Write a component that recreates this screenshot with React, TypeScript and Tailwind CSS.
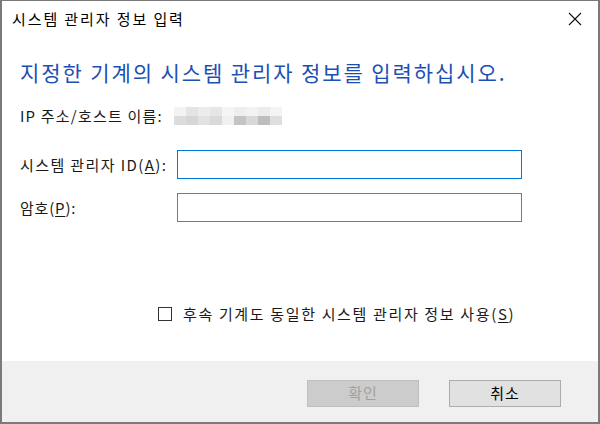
import React from 'react';

const font = { fontFamily: '"Noto Sans CJK KR", "Noto Sans", sans-serif' };

const mosaic = [
    ['#f3f3f3', '#e4e4e4', '#ececec', '#e6e6e6', '#f5f5f5', '#eeeeee', '#f2f2f2', '#ececec', '#f4f4f4'],
    ['#dcdcdc', '#d6d6d6', '#e2e2e2', '#dadada', '#f0f0f0', '#c2c4c6', '#d8d8d8', '#bcbec0', '#dedede'],
];

const Mnemonic: React.FC<{ k: string }> = ({ k }) => <span className="underline underline-offset-2">{k}</span>;

const App: React.FC = () => (
    <div className="w-[600px] h-[424px] bg-white flex flex-col border-t border-x-2 border-b-2 border-[#7a7a7a] text-[#1a1a1a] overflow-hidden" style={font}>
        <div className="h-[36px] shrink-0 flex items-center justify-between pl-[10px] pr-[12px]">
            <span className="text-[15px] leading-[20px] tracking-[1.9px] text-black">시스템 관리자 정보 입력</span>
            <svg width="14" height="14" viewBox="0 0 14 14" className="mr-[4px]">
                <path d="M1 1 L13 13 M13 1 L1 13" stroke="#111" strokeWidth="1.1" fill="none" />
            </svg>
        </div>

        <div className="flex-1 flex flex-col pl-[18px]">
            <h1 className="mt-[22px] text-[21px] leading-[26px] tracking-[1.9px] text-[#1c4fb4]">지정한 기계의 시스템 관리자 정보를 입력하십시오.</h1>

            <div className="mt-[21px] flex items-center h-[20px] text-[15px]">
                <span className="w-[154px] tracking-[1.2px]">IP 주소/호스트 이름:</span>
                <div className="flex flex-col">
                    {mosaic.map((row, r) => (
                        <div key={r} className="flex">
                            {row.map((c, i) => <div key={i} className="w-[12px] h-[9px]" style={{ backgroundColor: c }} />)}
                        </div>
                    ))}
                </div>
            </div>

            <div className="mt-[24px] grid grid-cols-[157px_345px] gap-y-[14px] items-center text-[15px] leading-[20px]">
                <span className="tracking-[1.4px]">시스템 관리자 ID(<Mnemonic k="A" />):</span>
                <div className="h-[29px] border border-[#0078d7] bg-white" />
                <span className="tracking-[0.8px]">암호(<Mnemonic k="P" />):</span>
                <div className="h-[29px] border border-[#7a7a7a] bg-white" />
            </div>

            <div className="mt-[82px] flex items-center h-[20px] pl-[138px] text-[15px]">
                <div className="w-[14px] h-[14px] border border-[#333] bg-white" />
                <span className="ml-[11px] tracking-[1.65px]">후속 기계도 동일한 시스템 관리자 정보 사용(<Mnemonic k="S" />)</span>
            </div>
        </div>

        <div className="h-[61px] shrink-0 bg-[#f0f0f0] flex items-start justify-end gap-[30px] pt-[19px] pr-[37px] text-[15px]">
            <div className="w-[112px] h-[27px] flex items-center justify-center bg-[#cccccc] border border-[#bfbfbf] text-[#a0a0a0] tracking-[1px]">확인</div>
            <div className="w-[112px] h-[27px] flex items-center justify-center bg-[#e1e1e1] border border-[#adadad] text-black tracking-[1px]">취소</div>
        </div>
    </div>
);

export default App;
